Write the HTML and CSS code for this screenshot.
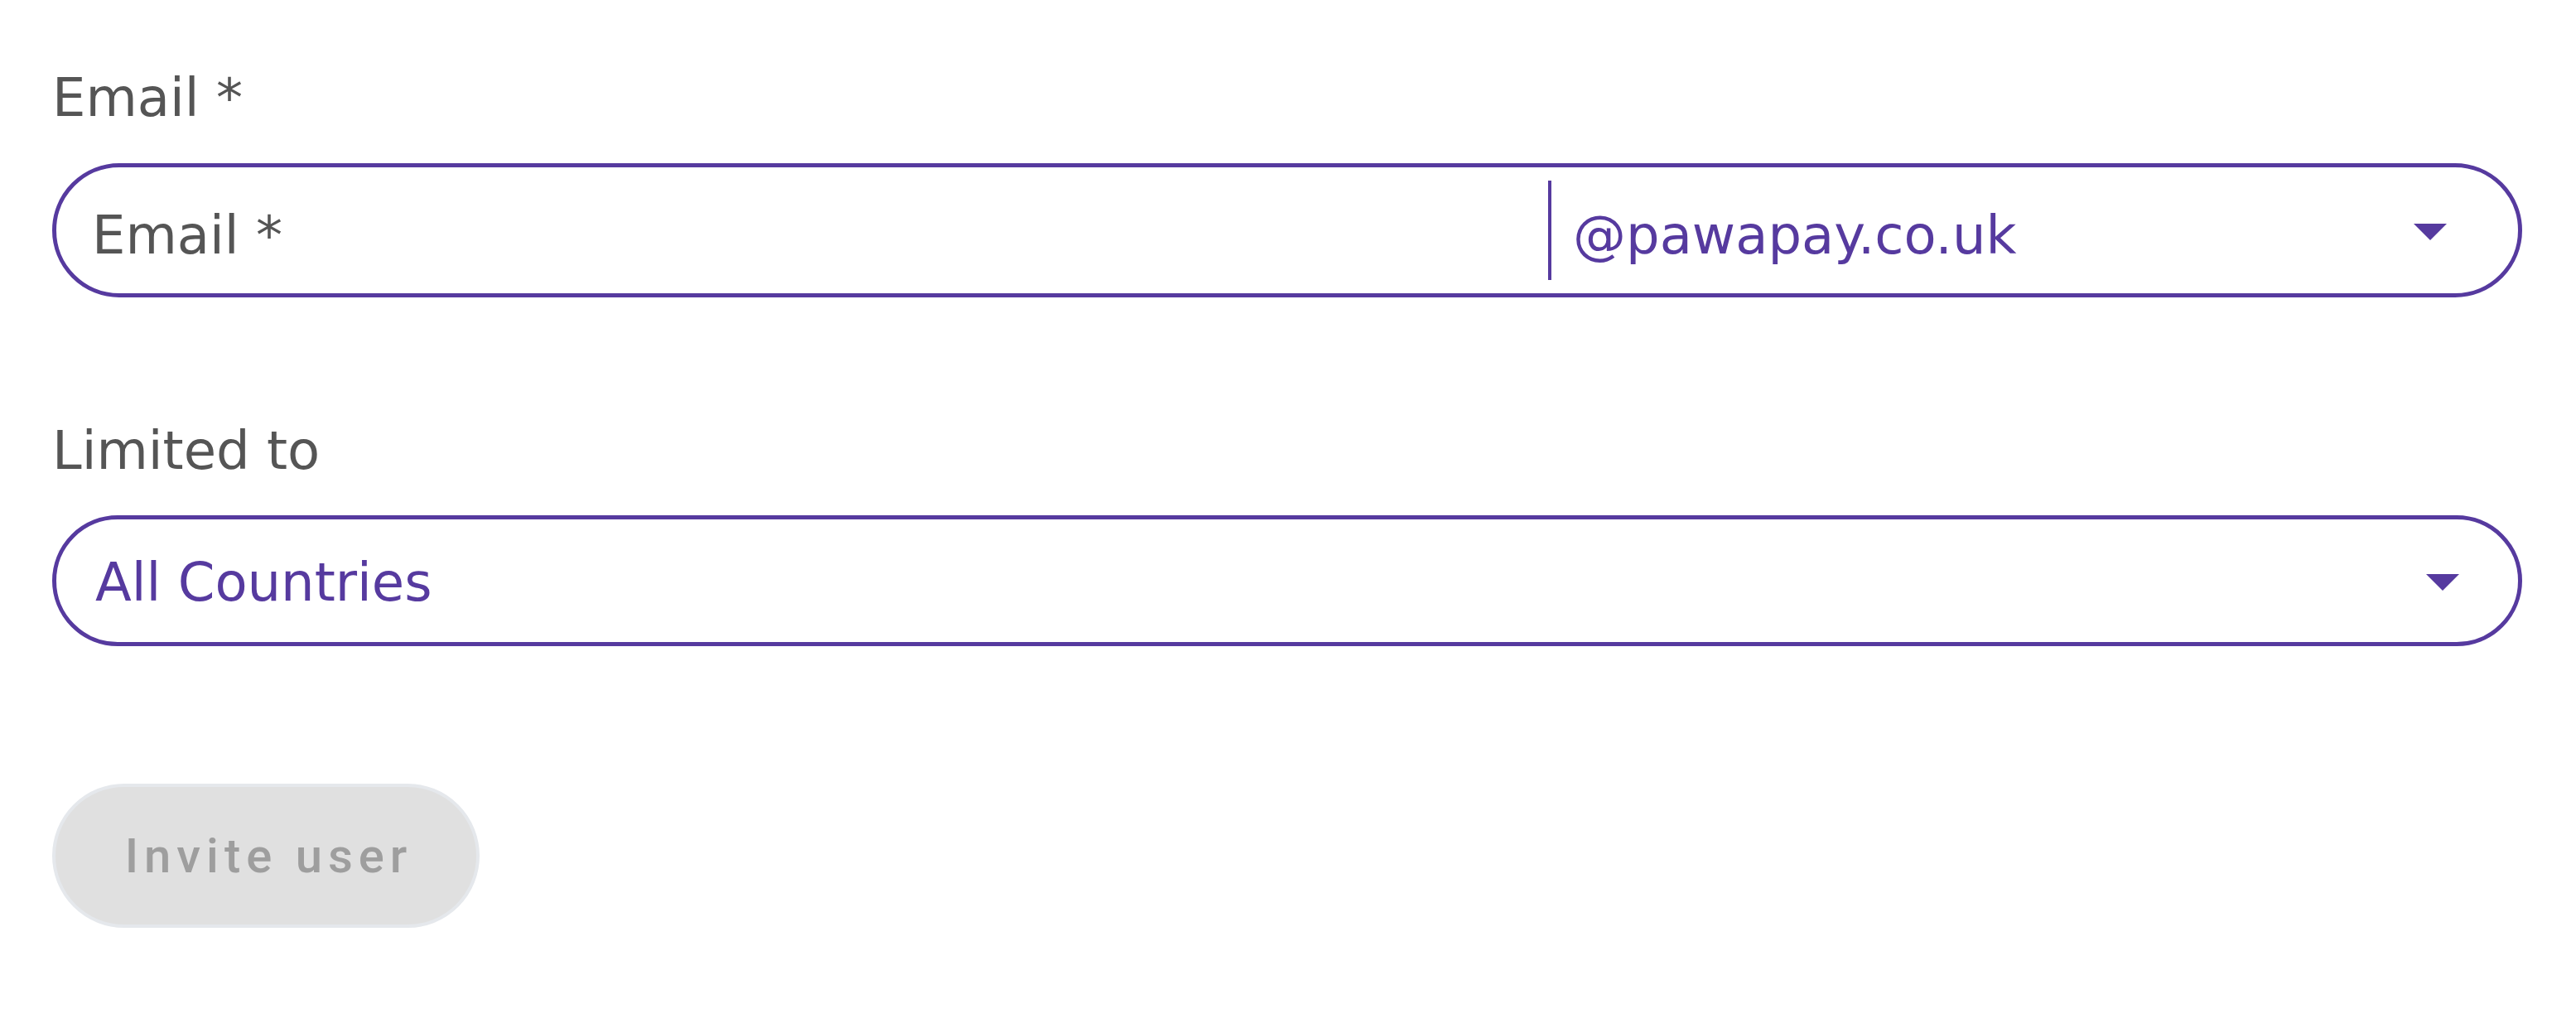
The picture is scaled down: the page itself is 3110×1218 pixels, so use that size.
FILE: index.html
```html
<!DOCTYPE html>
<html lang="en">
<head>
<meta charset="utf-8">
<title>Invite user</title>
<link rel="stylesheet" href="styles.css">
</head>
<body>
<form class="invite-form">
  <div class="field field-email">
    <label class="field-label">Email *</label>
    <div class="pill-box email-box">
      <span class="email-input">Email *</span>
      <div class="domain">
        <span class="domain-text">@pawapay.co.uk</span>
        <svg class="arrow" viewBox="0 0 24 24" aria-hidden="true"><path d="M7 10l5 5 5-5z"/></svg>
      </div>
    </div>
  </div>
  <div class="field field-limit">
    <label class="field-label">Limited to</label>
    <div class="pill-box select-box">
      <span class="select-value">All Countries</span>
      <svg class="arrow" viewBox="0 0 24 24" aria-hidden="true"><path d="M7 10l5 5 5-5z"/></svg>
    </div>
  </div>
  <button type="button" class="invite-btn" disabled>Invite user</button>
</form>
</body>
</html>
```
FILE: styles.css
```css
html, body {
  margin: 0;
  padding: 0;
  background: #ffffff;
}

body {
  font-family: "DejaVu Sans", "Noto Sans", sans-serif;
}

.invite-form {
  width: 2982px;
  padding: 70px 0 0 63px;
  display: flex;
  flex-direction: column;
  align-items: flex-start;
}

.field {
  width: 100%;
  display: flex;
  flex-direction: column;
}

.field-email {
  margin-bottom: 137px;
}

.field-label {
  font-size: 64px;
  line-height: 96px;
  color: #555555;
  margin-bottom: 31px;
}

.field-limit .field-label {
  margin-bottom: 30px;
}

.pill-box {
  box-sizing: border-box;
  width: 100%;
  border: 5px solid #563a9f;
  border-radius: 200px;
  display: flex;
  align-items: center;
  font-size: 64px;
}

.email-box {
  height: 162px;
  padding: 0 58px 0 43px;
}

.email-input {
  flex: 1;
  color: #555555;
  line-height: 96px;
  padding-top: 12px;
}

.domain {
  width: 1083px;
  height: 120px;
  border-left: 4px solid #563a9f;
  display: flex;
  align-items: center;
  padding-left: 26px;
}

.domain-text {
  flex: 1;
  color: #563a9f;
  line-height: 96px;
  padding-top: 12px;
}

.arrow {
  width: 96px;
  height: 96px;
  fill: #563a9f;
  flex: none;
}

.select-box {
  height: 158px;
  padding: 0 43px 0 47px;
}

.select-value {
  flex: 1;
  color: #563a9f;
  line-height: 96px;
  padding-top: 4px;
}

.invite-btn {
  margin-top: 166px;
  box-sizing: border-box;
  width: 516px;
  height: 174px;
  border: 4px solid #e5e8ec;
  border-radius: 90px;
  background: #e0e0e0;
  color: #9e9e9e;
  font-family: "Roboto", "Liberation Sans", sans-serif;
  font-weight: 500;
  font-size: 58px;
  letter-spacing: 7px;
  padding: 0 0 0 7px;
  text-align: center;
}
```
